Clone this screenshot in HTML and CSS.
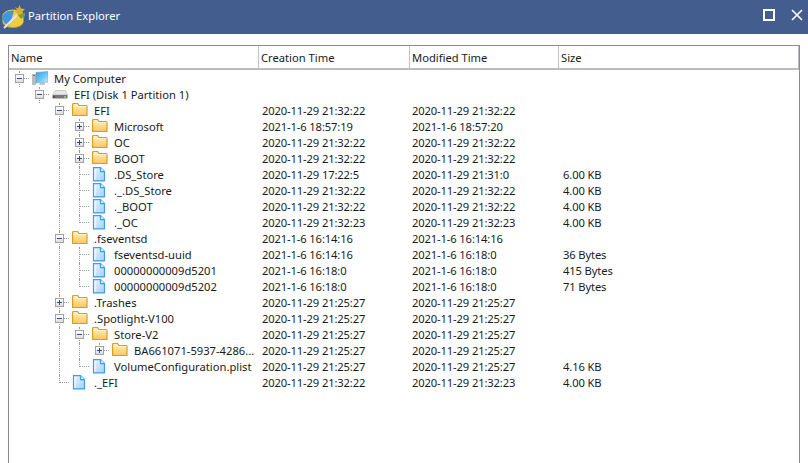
FILE: index.html
```html
<!DOCTYPE html>
<html lang="en">
<head>
<meta charset="utf-8">
<title>Partition Explorer</title>
<link rel="stylesheet" href="styles.css">
</head>
<body>
<svg class="defs" width="0" height="0" aria-hidden="true">
  <defs>
    <linearGradient id="fold" x1="0" y1="0" x2="0" y2="1"><stop offset="0" stop-color="#fff0c4"/><stop offset="1" stop-color="#fdc562"/></linearGradient>
    <linearGradient id="pg" x1="0" y1="0" x2="1" y2="1"><stop offset="0" stop-color="#eef7ff"/><stop offset="1" stop-color="#9fd0f8"/></linearGradient>
    <linearGradient id="scr" x1="0" y1="0" x2="1" y2="1"><stop offset="0" stop-color="#2f9fe6"/><stop offset="0.6" stop-color="#72cdf5"/><stop offset="1" stop-color="#d5f2fb"/></linearGradient>
    <symbol id="i-folder" viewBox="0 0 16 16">
      <path d="M.6 12.500V1.500a1 1 0 0 1 1-1h4l1.500 2h7.400a.5.5 0 0 1 .5.5v9.500z" fill="url(#fold)" stroke="#d8a013" stroke-width="1.200"/>
      <path d="M1.200 3.500h13.600" stroke="#fff0c8"/>
    </symbol>
    <symbol id="i-file" viewBox="0 0 16 16">
      <path d="M1.500 .6h7l4 4v9.300h-11z" fill="url(#pg)" stroke="#3a9ee8" stroke-width="1.200"/>
      <path d="M8.500 .6v4h4" fill="#dff0fe" stroke="#3a9ee8" stroke-width="1.200"/>
      <path d="M3 2v11" stroke="#fff" stroke-opacity=".8"/>
    </symbol>
    <symbol id="i-pc" viewBox="0 0 16 16">
      <path d="M0 3h4v11H0z" fill="#b9bcc0"/><path d="M1 4h2v1H1z" fill="#6c7074"/>
      <path d="M4 1.500l12-1v10.500l-12 1z" fill="url(#scr)" stroke="#8b97a3" stroke-width=".6"/>
      <path d="M8 12h5v2H7z" fill="#c3c6c9"/>
    </symbol>
    <symbol id="i-disk" viewBox="0 0 16 16">
      <path d="M3.500 3.500h10l2 4.500h-15z" fill="#e6e6e6" stroke="#b4b4b4" stroke-width=".6"/>
      <path d="M.5 8h15v3.500h-15z" fill="#777"/>
      <path d="M1 9h2v2H1z" fill="#4d4d4d"/><path d="M12 9.500h2v1h-2z" fill="#b9f0b4"/>
    </symbol>
  </defs>
</svg>

<header class="titlebar">
  <svg class="logo" viewBox="0 0 26 26" width="26" height="26" aria-hidden="true">
    <ellipse cx="12" cy="19" rx="10.500" ry="6" fill="#d8a50c"/>
    <path d="M1.500 13a10.500 6.500 0 0 1 21 0v5a10.500 6 0 0 1-21 0z" fill="#f0cf3c"/>
    <path d="M1.500 15C1.500 10 6 7.500 13 7.500l-2 7-3 8c-4-1-6.500-4-6.500-7.500z" fill="#3f97dc"/>
    <path d="M3 25L16 12" stroke="#e6e6e6" stroke-width="2"/>
    <path d="M14 4l3 1.500L18.500 2l1.500 3.500 4 .5-2.500 2.500 1.500 3.500-3.500-1-2.500 2.500-.5-3.500-3.500-1.500 3-1.500z" fill="#d6ae34"/>
    <path d="M17 12l7-2v3l-4 3z" fill="#6aa63e"/>
  </svg>
  <span class="title">Partition Explorer</span>
  <span class="winbtns">
    <svg class="winbtn" viewBox="0 0 14 14" width="14" height="14" aria-hidden="true"><path d="M2 2h10v10H2z" fill="none" stroke="#fff" stroke-width="2"/></svg>
    <svg class="winbtn" viewBox="0 0 14 14" width="14" height="14" aria-hidden="true"><path d="M2 2l10 10M12 2L2 12" fill="none" stroke="#fff" stroke-width="1.600"/></svg>
  </span>
</header>

<main class="panel">
  <div class="row head">
    <div class="hcell c-name">Name</div>
    <div class="hcell c-created">Creation Time</div>
    <div class="hcell c-modified">Modified Time</div>
    <div class="hcell c-size">Size</div>
  </div>
  <div class="rows">
    <div class="row"><div class="c-name"><i class="slot tee"><b class="box"></b></i><svg class="ic"><use href="#i-pc"/></svg><span class="label">My Computer</span></div></div>
    <div class="row"><div class="c-name"><i class="slot"></i><i class="slot tee"><b class="box"></b></i><svg class="ic"><use href="#i-disk"/></svg><span class="label">EFI (Disk 1 Partition 1)</span></div></div>

    <div class="row"><div class="c-name"><i class="slot"></i><i class="slot"></i><i class="slot tee"><b class="box"></b></i><svg class="ic"><use href="#i-folder"/></svg><span class="label">EFI</span></div><div class="c-created">2020-11-29 21:32:22</div><div class="c-modified">2020-11-29 21:32:22</div><div class="c-size"></div></div>
    <div class="row"><div class="c-name"><i class="slot"></i><i class="slot"></i><i class="slot pass"></i><i class="slot tee"><b class="box open"></b></i><svg class="ic"><use href="#i-folder"/></svg><span class="label">Microsoft</span></div><div class="c-created">2021-1-6 18:57:19</div><div class="c-modified">2021-1-6 18:57:20</div><div class="c-size"></div></div>
    <div class="row"><div class="c-name"><i class="slot"></i><i class="slot"></i><i class="slot pass"></i><i class="slot tee"><b class="box open"></b></i><svg class="ic"><use href="#i-folder"/></svg><span class="label">OC</span></div><div class="c-created">2020-11-29 21:32:22</div><div class="c-modified">2020-11-29 21:32:22</div><div class="c-size"></div></div>
    <div class="row"><div class="c-name"><i class="slot"></i><i class="slot"></i><i class="slot pass"></i><i class="slot tee"><b class="box open"></b></i><svg class="ic"><use href="#i-folder"/></svg><span class="label">BOOT</span></div><div class="c-created">2020-11-29 21:32:22</div><div class="c-modified">2020-11-29 21:32:22</div><div class="c-size"></div></div>
    <div class="row"><div class="c-name"><i class="slot"></i><i class="slot"></i><i class="slot pass"></i><i class="slot tee"></i><svg class="ic"><use href="#i-file"/></svg><span class="label">.DS_Store</span></div><div class="c-created">2020-11-29 17:22:5</div><div class="c-modified">2020-11-29 21:31:0</div><div class="c-size">6.00 KB</div></div>
    <div class="row"><div class="c-name"><i class="slot"></i><i class="slot"></i><i class="slot pass"></i><i class="slot tee"></i><svg class="ic"><use href="#i-file"/></svg><span class="label">._.DS_Store</span></div><div class="c-created">2020-11-29 21:32:22</div><div class="c-modified">2020-11-29 21:32:22</div><div class="c-size">4.00 KB</div></div>
    <div class="row"><div class="c-name"><i class="slot"></i><i class="slot"></i><i class="slot pass"></i><i class="slot tee"></i><svg class="ic"><use href="#i-file"/></svg><span class="label">._BOOT</span></div><div class="c-created">2020-11-29 21:32:22</div><div class="c-modified">2020-11-29 21:32:22</div><div class="c-size">4.00 KB</div></div>
    <div class="row"><div class="c-name"><i class="slot"></i><i class="slot"></i><i class="slot pass"></i><i class="slot elbow"></i><svg class="ic"><use href="#i-file"/></svg><span class="label">._OC</span></div><div class="c-created">2020-11-29 21:32:23</div><div class="c-modified">2020-11-29 21:32:23</div><div class="c-size">4.00 KB</div></div>

    <div class="row"><div class="c-name"><i class="slot"></i><i class="slot"></i><i class="slot tee"><b class="box"></b></i><svg class="ic"><use href="#i-folder"/></svg><span class="label">.fseventsd</span></div><div class="c-created">2021-1-6 16:14:16</div><div class="c-modified">2021-1-6 16:14:16</div><div class="c-size"></div></div>
    <div class="row"><div class="c-name"><i class="slot"></i><i class="slot"></i><i class="slot pass"></i><i class="slot tee"></i><svg class="ic"><use href="#i-file"/></svg><span class="label">fseventsd-uuid</span></div><div class="c-created">2021-1-6 16:14:16</div><div class="c-modified">2021-1-6 16:18:0</div><div class="c-size">36 Bytes</div></div>
    <div class="row"><div class="c-name"><i class="slot"></i><i class="slot"></i><i class="slot pass"></i><i class="slot tee"></i><svg class="ic"><use href="#i-file"/></svg><span class="label">00000000009d5201</span></div><div class="c-created">2021-1-6 16:18:0</div><div class="c-modified">2021-1-6 16:18:0</div><div class="c-size">415 Bytes</div></div>
    <div class="row"><div class="c-name"><i class="slot"></i><i class="slot"></i><i class="slot pass"></i><i class="slot elbow"></i><svg class="ic"><use href="#i-file"/></svg><span class="label">00000000009d5202</span></div><div class="c-created">2021-1-6 16:18:0</div><div class="c-modified">2021-1-6 16:18:0</div><div class="c-size">71 Bytes</div></div>

    <div class="row"><div class="c-name"><i class="slot"></i><i class="slot"></i><i class="slot tee"><b class="box open"></b></i><svg class="ic"><use href="#i-folder"/></svg><span class="label">.Trashes</span></div><div class="c-created">2020-11-29 21:25:27</div><div class="c-modified">2020-11-29 21:25:27</div><div class="c-size"></div></div>
    <div class="row"><div class="c-name"><i class="slot"></i><i class="slot"></i><i class="slot tee"><b class="box"></b></i><svg class="ic"><use href="#i-folder"/></svg><span class="label">.Spotlight-V100</span></div><div class="c-created">2020-11-29 21:25:27</div><div class="c-modified">2020-11-29 21:25:27</div><div class="c-size"></div></div>
    <div class="row"><div class="c-name"><i class="slot"></i><i class="slot"></i><i class="slot pass"></i><i class="slot tee"><b class="box"></b></i><svg class="ic"><use href="#i-folder"/></svg><span class="label">Store-V2</span></div><div class="c-created">2020-11-29 21:25:27</div><div class="c-modified">2020-11-29 21:25:27</div><div class="c-size"></div></div>
    <div class="row"><div class="c-name"><i class="slot"></i><i class="slot"></i><i class="slot pass"></i><i class="slot pass"></i><i class="slot elbow"><b class="box open"></b></i><svg class="ic"><use href="#i-folder"/></svg><span class="label">BA661071-5937-4286...</span></div><div class="c-created">2020-11-29 21:25:27</div><div class="c-modified">2020-11-29 21:25:27</div><div class="c-size"></div></div>
    <div class="row"><div class="c-name"><i class="slot"></i><i class="slot"></i><i class="slot pass"></i><i class="slot elbow"></i><svg class="ic"><use href="#i-file"/></svg><span class="label">VolumeConfiguration.plist</span></div><div class="c-created">2020-11-29 21:25:27</div><div class="c-modified">2020-11-29 21:25:27</div><div class="c-size">4.16 KB</div></div>
    <div class="row"><div class="c-name"><i class="slot"></i><i class="slot"></i><i class="slot elbow"></i><svg class="ic"><use href="#i-file"/></svg><span class="label">._EFI</span></div><div class="c-created">2020-11-29 21:32:22</div><div class="c-modified">2020-11-29 21:32:23</div><div class="c-size">4.00 KB</div></div>
  </div>
</main>
</body>
</html>
```
FILE: styles.css
```css
* { box-sizing: border-box; }
html, body { height: 100%; }
body {
  margin: 0;
  overflow: hidden;
  background: #fff;
  color: #1a1a1a;
  font: 11.2px/16px "Noto Sans", "Open Sans", sans-serif;
}
.defs { position: absolute; }
.titlebar {
  height: 34px;
  background: #435e8e;
  display: flex;
  align-items: center;
  padding: 0 4px 2px 1px;
  color: #fff;
}
.logo { flex: none; }
.title { margin-left: 1px; }
.winbtns { margin-left: auto; margin-bottom: 2px; display: flex; gap: 14px; align-items: center; }
.winbtn { display: block; }

.panel {
  margin: 11px 8px 0;
  height: 440px;
  border: 1px solid #8b8b94;
  border-bottom: 0;
}
.row { display: flex; height: 16px; }
.head {
  height: 24px;
  border-bottom: 2px solid #bcbcbc;
  border-right: 1px solid #bcbcbc;
}
.hcell { line-height: 23px; padding-left: 2px; border-right: 1px solid #c4c4c4; }
.hcell.c-size { border-right: 0; }
.rows { padding-top: 1px; }
.c-name { width: 250px; display: flex; align-items: center; flex: none; white-space: nowrap; }
.c-created, .c-modified { width: 150px; flex: none; padding-left: 3px; letter-spacing: -.13px; }
.c-size { flex: 1; padding-left: 4px; letter-spacing: -.13px; }
.head .c-created { width: 151px; padding-left: 2px; letter-spacing: 0; }
.head .c-modified { width: 149px; padding-left: 2px; letter-spacing: 0; }
.head .c-name { display: block; padding-left: 2px; }
.head .c-size { padding-left: 2px; letter-spacing: 0; }

.label { margin-left: 6px; }
.ic { width: 16px; height: 16px; margin-left: 3px; flex: none; }

/* tree guides: dotted lines and expander boxes lie over each indent slot */
.slot { width: 20px; height: 16px; flex: none; position: relative; display: block; }
.pass::before, .tee::before, .elbow::before {
  content: "";
  position: absolute;
  left: 10px;
  top: 0;
  height: 16px;
  border-left: 1px dotted #999;
}
.elbow::before { height: 8px; }
.tee::after, .elbow::after {
  content: "";
  position: absolute;
  left: 11px;
  top: 7px;
  width: 9px;
  border-top: 1px dotted #999;
}
.box {
  position: absolute;
  z-index: 1;
  left: 6px;
  top: 3px;
  width: 9px;
  height: 9px;
  border: 1px solid #a2a2a2;
  background:
    linear-gradient(#2f4a86, #2f4a86) center / 5px 1px no-repeat,
    linear-gradient(#fff, #dedede);
}
.box.open {
  background:
    linear-gradient(#2f4a86, #2f4a86) center / 5px 1px no-repeat,
    linear-gradient(#2f4a86, #2f4a86) center / 1px 5px no-repeat,
    linear-gradient(#fff, #dedede);
}
```
